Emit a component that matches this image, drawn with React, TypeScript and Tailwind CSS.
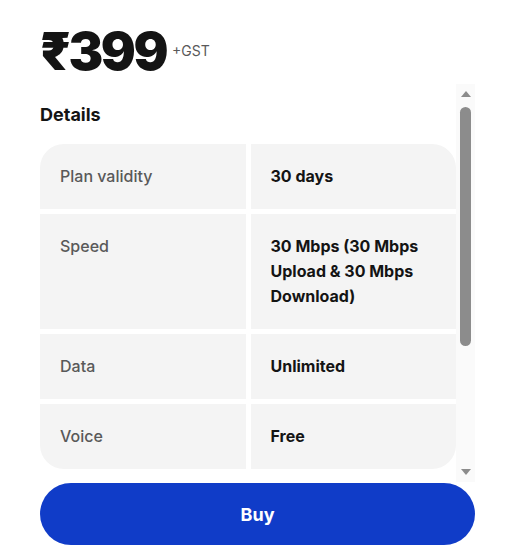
import React from 'react';

interface Row {
  label: string;
  value: string;
}

const rows: Row[] = [
  { label: 'Plan validity', value: '30 days' },
  { label: 'Speed', value: '30 Mbps (30 Mbps Upload & 30 Mbps Download)' },
  { label: 'Data', value: 'Unlimited' },
  { label: 'Voice', value: 'Free' },
];

function ScrollTrack() {
  // drawn scrollbar, the headless browser hides the native one
  return (
    <div className="flex w-[19px] shrink-0 flex-col items-center bg-[#fafafa]">
      <svg width="12" height="8" viewBox="0 0 12 8" className="mt-[6px]">
        <path d="M6 1 L11 7 L1 7 Z" fill="#8c8c8c" />
      </svg>
      <div className="mt-[9px] h-[239px] w-[11px] rounded-full bg-[#8c8c8c]" />
      <div className="flex-1" />
      <svg width="12" height="8" viewBox="0 0 12 8" className="mb-[6px]">
        <path d="M1 1 L11 1 L6 7 Z" fill="#8c8c8c" />
      </svg>
    </div>
  );
}

export default function App() {
  return (
    <div className="h-[547px] w-[513px] bg-white pl-10 pr-[38px] font-['Inter',sans-serif] text-[#141414]">
      {/* Price */}
      <div className="flex items-start gap-[6px] pt-[24px]">
        <span className="text-[52px] font-black leading-[56px] tracking-[-2.5px]">₹399</span>
        <span className="mt-[19px] text-[14px] leading-4 text-[#595959]">+GST</span>
      </div>

      {/* Details */}
      <div className="mt-[4px] flex h-[398px]">
        <div className="w-[416px] overflow-hidden">
          <h2 className="pt-[19px] text-[18px] font-bold leading-6">Details</h2>
          <div className="mt-[17px] grid grid-cols-2 gap-[5px] overflow-hidden rounded-[24px]">
            {rows.map((row) => (
              <React.Fragment key={row.label}>
                <div className="bg-[#f4f4f4] px-5 py-5 text-[16px] font-medium leading-[25px] text-[#595959]">
                  {row.label}
                </div>
                <div className="bg-[#f4f4f4] px-5 py-5 text-[16px] font-bold leading-[25px] text-[#141414]">
                  {row.value}
                </div>
              </React.Fragment>
            ))}
          </div>
        </div>
        <ScrollTrack />
      </div>

      {/* Buy */}
      <button className="mt-[1px] h-[62px] w-full rounded-full bg-[#103cc8] text-[18px] font-bold text-white">
        Buy
      </button>
    </div>
  );
}
